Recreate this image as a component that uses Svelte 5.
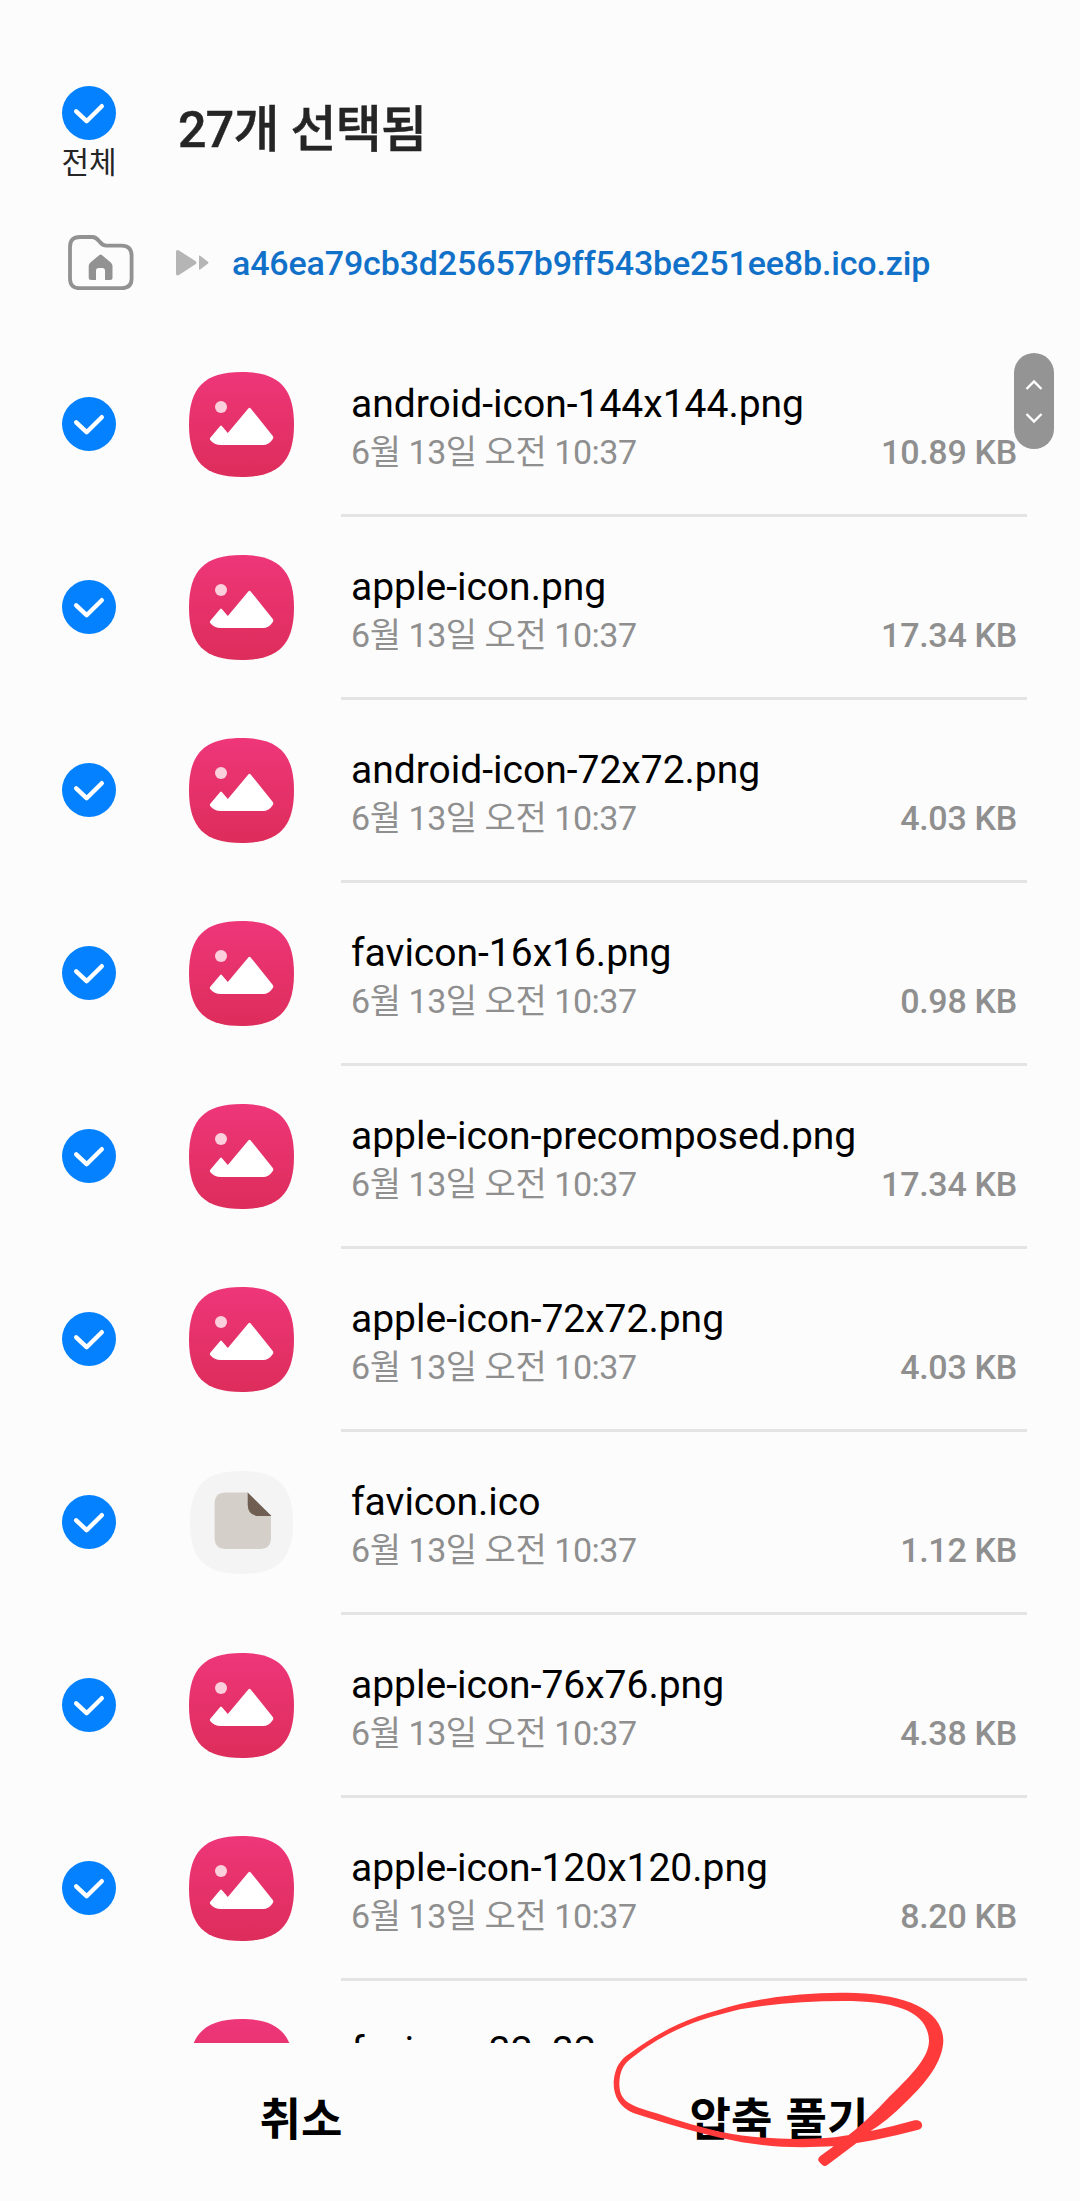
<script>
	const date = '6월 13일 오전 10:37';

	let files = $state([
		{ name: 'android-icon-144x144.png', size: '10.89 KB', checked: true },
		{ name: 'apple-icon.png', size: '17.34 KB', checked: true },
		{ name: 'android-icon-72x72.png', size: '4.03 KB', checked: true },
		{ name: 'favicon-16x16.png', size: '0.98 KB', checked: true },
		{ name: 'apple-icon-precomposed.png', size: '17.34 KB', checked: true },
		{ name: 'apple-icon-72x72.png', size: '4.03 KB', checked: true },
		{ name: 'favicon.ico', size: '1.12 KB', checked: true },
		{ name: 'apple-icon-76x76.png', size: '4.38 KB', checked: true },
		{ name: 'apple-icon-120x120.png', size: '8.20 KB', checked: true },
		{ name: 'favicon-32x32.png', size: '', checked: true }
	]);
</script>

{#snippet check(on)}
	<svg class="check" viewBox="0 0 54 54">
		<circle cx="27" cy="27" r="27" fill={on ? '#0381fe' : '#d0d0d0'} />
		<path d="M14.2 25.3 24.6 35.2 39.8 20.2" fill="none" stroke="#fff" stroke-width="4.4" stroke-linecap="round" stroke-linejoin="round" />
	</svg>
{/snippet}

<div class="screen">
	<header>
		<div class="all">
			{@render check(true)}
			<span>전체</span>
		</div>
		<h1>27개 선택됨</h1>
	</header>

	<nav>
		<svg class="folder" viewBox="0 0 66 56">
			<path d="M2 12Q2 2 12 2H24.5C31.5 2 31 10.7 38.5 10.7H53.5Q63.6 10.7 63.6 20.7V43.5Q63.6 53.2 53.5 53.2H12Q2 53.2 2 43.5Z" fill="none" stroke="#929292" stroke-width="3.8" />
			<path d="M31.4 20Q32.6 19 33.8 20L42.8 27.4Q44.5 29 44.5 31V42.5Q44.5 45 42 45H37V35.8Q37 33 34.4 33H30.8Q28 33 28 35.8V45H23.2Q20.7 45 20.7 42.5V31Q20.7 29 22.4 27.4Z" fill="#929292" />
		</svg>
		<svg class="arrows" viewBox="0 0 34 28">
			<path d="M1 3Q1 0 4 1.6L20.4 12Q22.6 13.7 20.4 15.2L4 26Q1 27.4 1 24.4Z" fill="#b5b5b5" />
			<path d="M24 7.2Q24 6 25.2 6.8L33 12.8Q34 13.6 33 14.4L25.2 20.4Q24 21.2 24 20Z" fill="#b5b5b5" />
		</svg>
		<span class="path">a46ea79cb3d25657b9ff543be251ee8b.ico.zip</span>
	</nav>

	<main>
		{#each files as file}
			<div class="row" on:click={() => (file.checked = !file.checked)}>
				{@render check(file.checked)}
				{#if file.name.endsWith('.ico')}
					<svg class="thumb" viewBox="0 0 105 105">
						<path d="M52.5 1C89 1 104 16 104 52.5S89 104 52.5 104 1 89 1 52.5 16 1 52.5 1Z" fill="#f4f4f4" />
						<path d="M37 22.6H58.7L82 46V67.5Q82 79 70.5 79H37Q25.6 79 25.6 67.5V34Q25.6 22.6 37 22.6Z" fill="#d4cfc9" />
						<path d="M58.7 22.6 82.5 46H70.5Q58.7 46 58.7 34.5Z" fill="#705e52" />
					</svg>
				{:else}
					<svg class="thumb" viewBox="0 0 105 105">
						<defs>
							<linearGradient id="pink" x1="0" y1="0" x2="0" y2="1">
								<stop offset="0" stop-color="#ee3679" />
								<stop offset="1" stop-color="#dd2d5b" />
							</linearGradient>
						</defs>
						<path d="M52.5 0C89.5 0 105 15.5 105 52.5S89.5 105 52.5 105 0 89.5 0 52.5 15.5 0 52.5 0Z" fill="url(#pink)" />
						<circle cx="32" cy="35" r="6" fill="#fbcfdb" />
						<path d="M21.5 65.5 31.2 54Q32 53 32.8 54L38.8 61 59.3 36.4Q60.5 35 61.7 36.4L83.8 64Q84.8 65.5 83.8 67Q80 73 74 73H32Q25 73 21.2 68Q20.4 66.8 21.5 65.5Z" fill="#fff" />
					</svg>
				{/if}
				<div class="info">
					<div class="name">{file.name}</div>
					<div class="meta">
						<span class="date">{date}</span>
						<span class="size">{file.size}</span>
					</div>
				</div>
			</div>
		{/each}
		<div class="scroller">
			<svg viewBox="0 0 40 96">
				<path d="M12.5 36 20 28.5 27.5 36M12.5 61 20 68.5 27.5 61" fill="none" stroke="#fff" stroke-width="2.4" />
			</svg>
		</div>
	</main>

	<footer>
		<button>취소</button>
		<button class="extract">
			압축 풀기
			<!-- hand-drawn highlight -->
			<svg class="mark" viewBox="0 0 1200 660">
				<path
					d="M985 479Q850 515 735 528C600 537 500 528 390 503Q280 478 130 429C90 412 70 380 71 335C75 290 92 268 120 250C240 162 320 136 450 102Q600 66 770 68C930 70 1058 110 1060 212C1058 275 1010 336 950 394Q890 455 840 484L800 519L712 585Q704 592 696 584L688 576Q680 568 690 559L760 508Q830 455 900 378C975 305 1016 260 1017 212C1014 125 920 93 760 93Q600 93 450 118C330 148 240 174 125 264Q88 290 88 340C88 390 110 405 200 430Q300 465 390 485C500 508 620 511 735 502Q850 486 974 451C997 446 1005 473 985 479Z"
					fill="#ff3a3a"
				/>
			</svg>
		</button>
	</footer>
</div>

<style>
	:global(body) {
		margin: 0;
		background: #fcfcfc;
	}
	.screen {
		display: flex;
		flex-direction: column;
		width: 1080px;
		height: 2201px;
		overflow: hidden;
		background: #fcfcfc;
		font-family: Roboto, 'Noto Sans CJK KR', sans-serif;
	}
	.check {
		display: block;
		flex: none;
		width: 54px;
		height: 54px;
	}
	header {
		display: flex;
		box-sizing: border-box;
		height: 216px;
		padding: 86px 0 0 62px;
	}
	.all {
		display: flex;
		flex-direction: column;
		align-items: center;
		width: 54px;
		color: #252525;
		font-size: 30px;
		line-height: 46px;
		white-space: nowrap;
	}
	h1 {
		margin: 12px 0 0 62px;
		color: #252525;
		font-size: 50px;
		font-weight: 500;
		line-height: 64px;
		letter-spacing: -0.7px;
		-webkit-text-stroke: 0.5px #252525;
	}
	nav {
		display: flex;
		align-items: center;
		height: 94px;
		margin-bottom: 24px;
		padding-left: 68px;
	}
	.folder {
		width: 66px;
		height: 56px;
	}
	.arrows {
		width: 34px;
		height: 28px;
		margin: 0 23px 0 41px;
	}
	.path {
		color: #1171c9;
		font-size: 34px;
		font-weight: 500;
		letter-spacing: -0.15px;
	}
	main {
		position: relative;
		height: 1709px;
		overflow: hidden;
	}
	.row {
		display: flex;
		align-items: center;
		height: 183px;
		padding-left: 62px;
		cursor: pointer;
	}
	.row .check {
		margin-bottom: 3px;
	}
	.thumb {
		flex: none;
		width: 105px;
		height: 105px;
		margin: 0 47px 2px 73px;
	}
	.info {
		box-sizing: border-box;
		width: 686px;
		height: 183px;
		padding: 46px 10px 0;
		border-bottom: 3px solid #e4e4e4;
	}
	.name {
		color: #000;
		font-size: 39px;
		line-height: 48px;
		white-space: nowrap;
	}
	.meta {
		display: flex;
		justify-content: space-between;
		color: #8f8f8f;
		font-size: 34px;
		line-height: 48px;
	}
	.date {
		letter-spacing: -0.45px;
	}
	.size {
		font-weight: 500;
		letter-spacing: -0.28px;
	}
	.scroller {
		position: absolute;
		top: 19px;
		right: 26px;
		width: 40px;
		height: 96px;
		border-radius: 20px;
		background: #949494;
	}
	.scroller svg {
		display: block;
	}
	footer {
		display: flex;
		height: 158px;
		padding: 0 62px;
	}
	button {
		position: relative;
		flex: 1;
		padding: 0 0 12px;
		border: 0;
		background: none;
		color: #000;
		font: inherit;
		font-size: 45px;
		font-weight: 700;
		word-spacing: 2px;
	}
	.mark {
		position: absolute;
		top: -73px;
		left: 50px;
		width: 400px;
		height: 220px;
		pointer-events: none;
	}
</style>
